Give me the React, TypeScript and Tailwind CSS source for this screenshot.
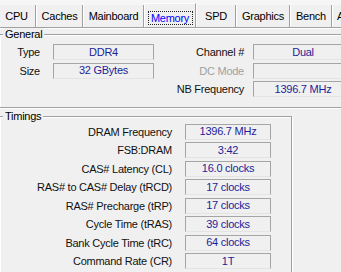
import React from 'react'

const tabs = [
  { name: 'CPU', w: 'w-[39px] -ml-[3px]' },
  { name: 'Caches', w: 'w-[47px]' },
  { name: 'Mainboard', w: 'w-[61px]' },
  { name: 'Memory', w: 'w-[52px]', active: true },
  { name: 'SPD', w: 'w-[40px]' },
  { name: 'Graphics', w: 'w-[54px]' },
  { name: 'Bench', w: 'w-[42px]' },
  { name: 'About', w: 'w-[44px]', left: true },
]

const timings = [
  ['DRAM Frequency', '1396.7 MHz'],
  ['FSB:DRAM', '3:42'],
  ['CAS# Latency (CL)', '16.0 clocks'],
  ['RAS# to CAS# Delay (tRCD)', '17 clocks'],
  ['RAS# Precharge (tRP)', '17 clocks'],
  ['Cycle Time (tRAS)', '39 clocks'],
  ['Bank Cycle Time (tRC)', '64 clocks'],
  ['Command Rate (CR)', '1T'],
]

function Field({ value, className }: { value?: string; className: string }) {
  return (
    <div
      className={`h-[16px] border border-[#a5a5a5] border-b-[#e4e4e4] flex items-center justify-center text-[#1d1d98] leading-none ${className}`}
    >
      {value}
    </div>
  )
}

function Group({ title, className, children }: { title: string; className: string; children: React.ReactNode }) {
  return (
    <div className={`relative border border-[#a0a0a0] shadow-[inset_1px_1px_0_#fff,1px_1px_0_#fff] ${className}`}>
      <span className="absolute -top-[7px] left-[3px] bg-[#f0f0f0] px-[2px] leading-[12px] text-black">{title}</span>
      {children}
    </div>
  )
}

export default function App() {
  return (
    <div
      className="w-[341px] h-[272px] overflow-hidden bg-[#f0f0f0] text-[11px] tracking-[-0.25px] text-[#111]"
      style={{ fontFamily: '"Liberation Sans", Arial, sans-serif' }}
    >
      {/* tab strip */}
      <div className="flex h-[28px] pt-[3px] bg-[#f6f6f6] border-b border-[#a0a0a0] shadow-[0_1px_0_#fff] whitespace-nowrap">
        {tabs.map((t) =>
          t.active ? (
            <div
              key={t.name}
              className={`${t.w} shrink-0 flex items-start justify-center pt-[7px] bg-[#f0f0f0] border-l border-t border-l-white border-t-white border-r border-r-[#a0a0a0]`}
            >
              <span className="w-[45px] h-[14px] flex items-center justify-center border border-dotted border-[#222] text-[#0000ff] leading-none">
                {t.name}
              </span>
            </div>
          ) : (
            <div
              key={t.name}
              className={`${t.w} shrink-0 mt-[2px] pt-[1px] flex items-center ${t.left ? 'justify-start pl-[4px]' : 'justify-center'} bg-[#f0f0f0] border-l border-l-white border-r border-r-[#a0a0a0] text-black`}
            >
              {t.name}
            </div>
          )
        )}
      </div>

      {/* General */}
      <Group title="General" className="mt-[6px] -ml-[1px] w-[420px] pt-[9px] pb-[9px]">
        <div className="flex">
          <div className="flex flex-col gap-[2px]">
            <div className="flex items-center">
              <span className="w-[40px] text-right">Type</span>
              <Field value="DDR4" className="ml-[13px] w-[101px]" />
            </div>
            <div className="flex items-center">
              <span className="w-[40px] text-right">Size</span>
              <Field value="32 GBytes" className="ml-[13px] w-[101px]" />
            </div>
          </div>
          <div className="flex flex-col gap-[2px] ml-[9px]">
            <div className="flex items-center">
              <span className="w-[81px] text-right">Channel #</span>
              <Field value="Dual" className="ml-[9px] w-[100px]" />
            </div>
            <div className="flex items-center">
              <span className="w-[81px] text-right text-[#a0a0a0]">DC Mode</span>
              <Field className="ml-[9px] w-[100px]" />
            </div>
            <div className="flex items-center">
              <span className="w-[81px] text-right">NB Frequency</span>
              <Field value="1396.7 MHz" className="ml-[9px] w-[100px]" />
            </div>
          </div>
        </div>
      </Group>

      {/* Timings */}
      <Group title="Timings" className="mt-[8px] -ml-[1px] w-[293px] h-[200px] pt-[7px]">
        <div className="flex flex-col gap-[2px]">
          {timings.map(([label, value]) => (
            <div key={label} className="flex items-center">
              <span className="w-[172px] text-right">{label}</span>
              <Field value={value} className="ml-[13px] w-[86px]" />
            </div>
          ))}
          <div className="flex items-center">
            <span className="w-[172px] text-right text-[#a0a0a0]">DRAM Idle Timer</span>
            <Field className="ml-[13px] w-[86px]" />
          </div>
        </div>
      </Group>
    </div>
  )
}
